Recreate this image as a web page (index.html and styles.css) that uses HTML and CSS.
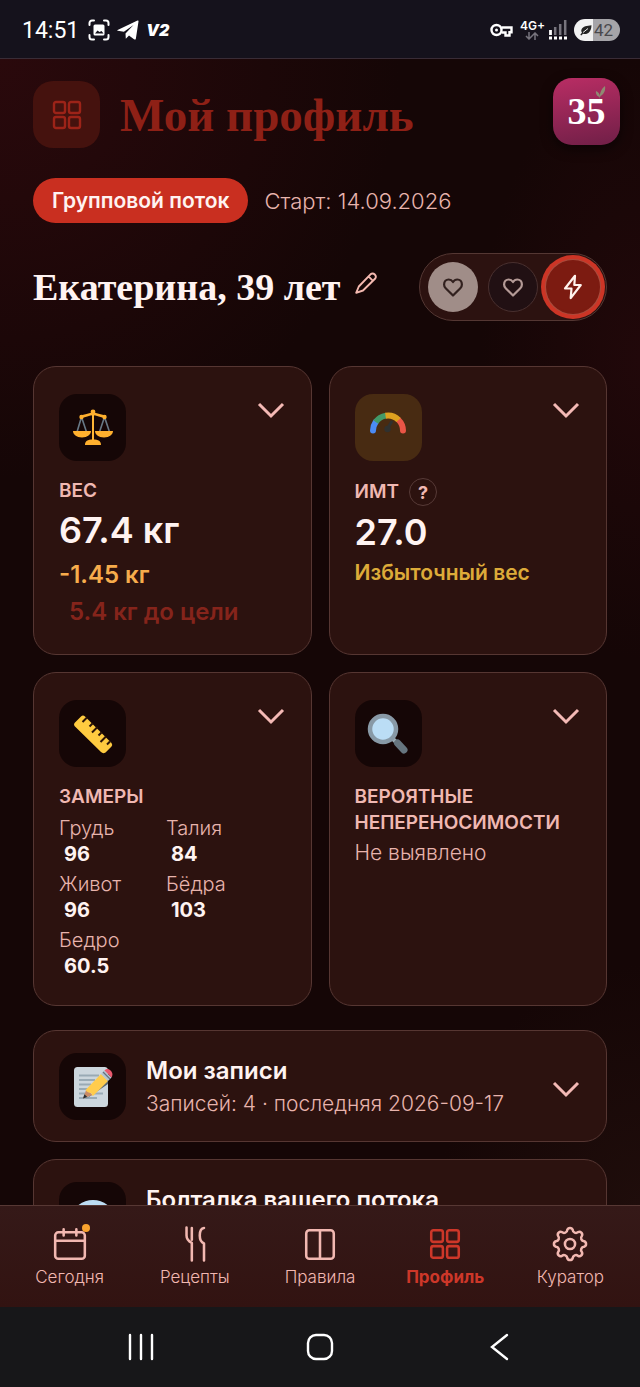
FILE: index.html
```html
<!DOCTYPE html>
<html lang="ru">
<head>
    <meta charset="UTF-8">
    <meta name="viewport" content="width=device-width, initial-scale=1.0">
    <title>Мой профиль</title>
    <link rel="stylesheet" href="styles.css">
</head>
<body>
    <svg class="defs" aria-hidden="true">
        <symbol id="grid" viewBox="-1 -1 34 34">
            <rect x="3" y="3" width="11" height="11" rx="2"/>
            <rect x="18" y="3" width="11" height="11" rx="2"/>
            <rect x="3" y="18" width="11" height="11" rx="2"/>
            <rect x="18" y="18" width="11" height="11" rx="2"/>
        </symbol>
        <symbol id="heart" viewBox="0 0 24 24">
            <path d="M12 20.5 4.7 13.2a5.2 5.2 0 0 1-1.6-3.8c0-2.9 2-4.9 4.6-4.9 1.8 0 3.3.9 4.3 2.5 1-1.6 2.5-2.500 4.300-2.500 2.600 0 4.600 2 4.600 4.900 0 1.500-.5 2.700-1.600 3.800z"/>
        </symbol>
        <symbol id="chevron" viewBox="0 0 28 28">
            <path d="M2 10l12 12 12-12"/>
        </symbol>
    </svg>

    <div class="status-bar">
        <div class="status-left">
            <span class="time">14:51</span>
            <svg width="22" height="22" viewBox="0 0 22 22" fill="none" stroke="#fff" stroke-width="2" stroke-linecap="round">
                <path d="M1.5 6V4a2.500 2.500 0 0 1 2.500-2.500h2M16 1.500h2A2.500 2.500 0 0 1 20.500 4v2M20.500 16v2a2.500 2.500 0 0 1-2.500 2.500h-2M6 20.500H4A2.500 2.500 0 0 1 1.500 18v-2"/>
                <rect x="5.5" y="5.5" width="11" height="11" rx="1.5" fill="#fff" stroke="none"/>
                <path d="M7 14.500l2.500-3 2 1.500 2-1 2 2.500z" fill="#15121c" stroke="none"/>
            </svg>
            <svg width="22" height="20" viewBox="0 0 22 20" fill="#fff">
                <path d="M.6 10 20.500.6c.8-.3 1.100 0 1 .8l-2.600 17c-.2 1.200-.9 1.500-1.900.8l-5-3.700-3.200 3.200-.3-5.300 8-8.300-9.600 6.700L.8 10.800c-.6-.2-.7-.5-.2-.8z"/>
            </svg>
            <span class="vpn">V2</span>
        </div>
        <div class="status-right">
            <svg width="23" height="14" viewBox="0 0 23 14" fill="none" stroke="#fff" stroke-width="2.4">
                <circle cx="6.5" cy="7" r="5"/>
                <circle cx="6.5" cy="7" r="1.5" fill="#fff" stroke="none"/>
                <path d="M11.500 4.500H21.500v4.800h-2V12.500h-4V9.500h-4"/>
            </svg>
            <div class="network">
                <span>4G+</span>
                <svg width="14" height="8" viewBox="0 0 14 8" fill="none" stroke="#77747d" stroke-width="1.5">
                    <path d="M4 0v7M1 4l3 3 3-3M10 8V1M7 4l3-3 3 3"/>
                </svg>
            </div>
            <svg width="20" height="20" viewBox="0 0 20 20">
                <path d="M7.200 7v8M12.200 4v11M17.200 0v15" stroke="#77747d" stroke-width="2.5"/>
                <path d="M2.500 10v5M1 18h3M6 18h3M11 18h3M16 18h3" stroke="#fff" stroke-width="2.8"/>
            </svg>
            <div class="battery">
                <svg width="12" height="11" viewBox="0 0 12 11" fill="#222">
                    <path d="M11.500.3C7 .8 3 1.300 1.600 4.200.9 5.700 1.500 7 2 7.600L.3 9.700l1 .8L3 8.800c3.600 1.200 8.300-.8 8.500-8.500z"/>
                    <path d="M3 7.500 8 3.500" stroke="#eee"/>
                </svg>
                <span>42</span>
            </div>
        </div>
    </div>

    <main class="page">
        <header class="page-header">
            <div class="heading">
                <div class="heading-icon"><svg class="line-icon" width="34" height="34"><use href="#grid"/></svg></div>
                <h1>Мой профиль</h1>
            </div>
            <div class="logo">
                35
                <svg class="sprout" width="11" height="13" viewBox="0 0 11 13" fill="#8f8a72">
                    <path d="M4.500 13C4.500 8 6 3 10 0c.8 4-.8 8-4.500 10z"/>
                    <path d="M5 11C2 10.500.5 8 1 5c2.500 1 4 3 4 6z"/>
                </svg>
            </div>
        </header>

        <div class="content">
            <div class="stream">
                <span class="chip">Групповой поток</span>
                <span class="start">Старт: 14.09.2026</span>
            </div>

            <div class="user">
                <h2>Екатерина, 39 лет</h2>
                <button class="edit" aria-label="Изменить">
                    <svg width="22" height="22" viewBox="0 0 22 22" fill="none" stroke="#f4b9b0" stroke-width="1.9" stroke-linejoin="round">
                        <path d="M1.200 20.800 3.800 14.500 15.500 2.300a3.200 3.200 0 0 1 4.500 4.500L8 18.500zM13.500 4.300l4.500 4.500"/>
                    </svg>
                </button>
                <div class="themes">
                    <button class="theme light" aria-label="Светлая тема"><svg width="24" height="24"><use href="#heart"/></svg></button>
                    <button class="theme dark" aria-label="Тёмная тема"><svg width="24" height="24"><use href="#heart"/></svg></button>
                    <button class="theme bright" aria-label="Яркая тема">
                        <svg width="26" height="26" viewBox="0 0 26 26"><path d="M15 1.800 5 14.500h6.500l-.8 9.700L20.800 11h-6.500z"/></svg>
                    </button>
                </div>
            </div>

            <div class="cards">
                <section class="card">
                    <div class="card-top">
                        <div class="tile">
                            <svg width="42" height="42" viewBox="0 0 42 42">
                                <path d="M9.500 10 5 25M9.500 10l5 15M32.500 10l-5 15M32.500 10l5 15" stroke="#687986" stroke-width="1.6" fill="none"/>
                                <path d="M8 9.500c5 .5 8-2.500 13-2.500s8 3 13 2.500" stroke="#ffb02e" stroke-width="2.6" fill="none"/>
                                <path d="M21 4v31" stroke="#ffb636" stroke-width="2"/>
                                <g fill="#ffb02e">
                                    <circle cx="21" cy="5" r="2.4"/><circle cx="9.5" cy="10" r="2.2"/><circle cx="32.5" cy="10" r="2.2"/>
                                    <path d="M1 24h18c0 3.500-3.500 6.500-9 6.500S1 27.500 1 24zM23 24h18c0 3.500-3.500 6.500-9 6.500s-9-3-9-6.500zM13 38c0-4 2.500-5.500 8-5.500s8 1.500 8 5.500z"/>
                                </g>
                            </svg>
                        </div>
                        <button class="toggle" aria-label="Вес"><svg width="28" height="28"><use href="#chevron"/></svg></button>
                    </div>
                    <h3>Вес</h3>
                    <p class="value">67.4 кг</p>
                    <p class="delta">-1.45 кг</p>
                    <p class="goal">5.4 кг до цели</p>
                </section>

                <section class="card">
                    <div class="card-top">
                        <div class="tile amber">
                            <svg width="42" height="42" viewBox="0 0 42 42" fill="none" stroke-width="6">
                                <path d="M6 23.500A15 15 0 0 1 8.700 15" stroke="#4b8bf5" stroke-linecap="round"/>
                                <path d="M36 23.500A15 15 0 0 0 31.600 13" stroke="#ea5546" stroke-linecap="round"/>
                                <path d="M8.700 15A15 15 0 0 1 19 8.600" stroke="#429a68"/>
                                <path d="M18.500 8.700A15 15 0 0 1 31.600 13" stroke="#dda11f"/>
                                <path d="M20.500 21.500 24.500 15" stroke="#30312f" stroke-width="3" stroke-linecap="round"/>
                                <circle cx="20.5" cy="22" r="3.2" fill="#30312f" stroke="none"/>
                            </svg>
                        </div>
                        <button class="toggle" aria-label="ИМТ"><svg width="28" height="28"><use href="#chevron"/></svg></button>
                    </div>
                    <div class="label-row">
                        <h3>ИМТ</h3>
                        <button class="help">?</button>
                    </div>
                    <p class="value">27.0</p>
                    <p class="note">Избыточный вес</p>
                </section>

                <section class="card">
                    <div class="card-top">
                        <div class="tile">
                            <svg width="42" height="42" viewBox="0 0 42 42">
                                <path d="M2.500 10 9 3.500Q11 1.500 13 3.500L39.500 30Q41 32 39.500 33.500L33.500 39.500Q31 41 29 39L2.500 13Q1.500 11.500 2.500 10z" fill="#ffcb40"/>
                                <path d="M15 3.500 10.500 8M20.500 9.500l-3 3M25.500 13 20 18.500M29.500 18.500l-3 3M34 22.500 28.500 28M38 27.500l-3 3" transform="translate(0 1)" stroke="#2b1408" stroke-width="2"/>
                            </svg>
                        </div>
                        <button class="toggle" aria-label="Замеры"><svg width="28" height="28"><use href="#chevron"/></svg></button>
                    </div>
                    <h3>Замеры</h3>
                    <dl class="sizes">
                        <div><dt>Грудь</dt><dd>96</dd></div>
                        <div><dt>Талия</dt><dd>84</dd></div>
                        <div><dt>Живот</dt><dd>96</dd></div>
                        <div><dt>Бёдра</dt><dd>103</dd></div>
                        <div><dt>Бедро</dt><dd>60.5</dd></div>
                    </dl>
                </section>

                <section class="card">
                    <div class="card-top">
                        <div class="tile">
                            <svg width="42" height="42" viewBox="0 0 42 42">
                                <path d="M26 26l4 4" stroke="#9aabb5" stroke-width="4"/>
                                <path d="M30.500 30l6.500 7" stroke="#66757f" stroke-width="7" stroke-linecap="round"/>
                                <circle cx="16" cy="16" r="13" fill="#bbddf5" stroke="#8899a6" stroke-width="4.5"/>
                            </svg>
                        </div>
                        <button class="toggle" aria-label="Непереносимости"><svg width="28" height="28"><use href="#chevron"/></svg></button>
                    </div>
                    <h3>Вероятные непереносимости</h3>
                    <p class="plain">Не выявлено</p>
                </section>
            </div>

            <div class="rows">
                <section class="row">
                    <div class="tile">
                        <svg width="42" height="42" viewBox="0 0 42 42">
                            <rect x="2" y="1" width="34" height="40" rx="3.5" fill="#ccd6dd"/>
                            <path d="M7 9.500h20M7 14h16M7 18.500h12M7 23h9M7 27.500h6M22 27.500h9M7 32h18" stroke="#99aab5" stroke-width="1.8"/>
                            <path d="M14 33 36 18V11L40 10z" fill="#596672"/>
                            <path d="M11 32.500 14.500 23 20.500 29z" fill="#c98b67"/>
                            <path d="M11 32.500l1.400-4.300 2.900 2.700z" fill="#292f33"/>
                            <path d="M13.500 24 29 8l7 7-15 15c-1-.8-1.500-1.800-1.700-2.800-2.300-.4-4.700-1-5.800-3.200z" fill="#ffcc4d"/>
                            <path d="M29 8l3.500-3.500 7 7L36 15z" fill="#b6c6d0"/>
                            <path d="M31 6l7 7" stroke="#66757f" stroke-width="1.2"/>
                            <path d="M32.500 4.500c3-4.500 10.500 1.500 7 7z" fill="#ea596e"/>
                        </svg>
                    </div>
                    <div class="row-text">
                        <h4>Мои записи</h4>
                        <p>Записей: 4 · последняя 2026-09-17</p>
                    </div>
                    <button class="toggle" aria-label="Мои записи"><svg width="28" height="28"><use href="#chevron"/></svg></button>
                </section>
                <section class="row">
                    <div class="tile">
                        <svg width="42" height="42" viewBox="0 0 42 42">
                            <ellipse cx="21" cy="21" rx="20" ry="16" fill="#bdddf4"/>
                            <path d="M10 32l-2 9 12-5z" fill="#bdddf4"/>
                        </svg>
                    </div>
                    <div class="row-text">
                        <h4>Болталка вашего потока</h4>
                    </div>
                </section>
            </div>
        </div>
    </main>

    <nav class="tabs">
        <a href="#today">
            <svg class="line-icon" viewBox="0 0 34 34">
                <rect x="3" y="6" width="28" height="25" rx="3"/><path d="M3 14h28M11 3v6M23 3v6"/>
            </svg>
            <span>Сегодня</span>
            <i class="dot"></i>
        </a>
        <a href="#recipes">
            <svg class="line-icon" viewBox="0 0 34 34">
                <path d="M9 1.500V9c0 3 1 5 5 7v16.500M14 2v11M25.500 32.500V16.500c-2.500-1-4-3-4-7.500 0-4 1.500-7 4-7.200"/>
            </svg>
            <span>Рецепты</span>
        </a>
        <a href="#rules">
            <svg class="line-icon" viewBox="0 0 34 34">
                <rect x="4" y="4" width="26" height="27" rx="3"/><path d="M17 4v27"/>
            </svg>
            <span>Правила</span>
        </a>
        <a href="#profile" class="active">
            <svg class="line-icon"><use href="#grid"/></svg>
            <span>Профиль</span>
        </a>
        <a href="#curator">
            <svg class="line-icon" viewBox="1 1 34 34">
                <circle cx="18" cy="18" r="4.8"/>
                <path d="M31.250 15.420A2.700 2.700 0 0 1 31.250 20.580A3 3 0 0 0 29.190 25.550A2.700 2.700 0 0 1 25.550 29.190A3 3 0 0 0 20.580 31.250A2.700 2.700 0 0 1 15.420 31.250A3 3 0 0 0 10.450 29.190A2.700 2.700 0 0 1 6.810 25.550A3 3 0 0 0 4.750 20.580A2.700 2.700 0 0 1 4.750 15.420A3 3 0 0 0 6.810 10.450A2.700 2.700 0 0 1 10.450 6.810A3 3 0 0 0 15.420 4.750A2.700 2.700 0 0 1 20.580 4.750A3 3 0 0 0 25.550 6.810A2.700 2.700 0 0 1 29.190 10.450A3 3 0 0 0 31.250 15.420z"/>
            </svg>
            <span>Куратор</span>
        </a>
    </nav>

    <div class="system-nav">
        <button aria-label="Недавние"><svg width="28" height="28" viewBox="0 0 28 28"><path d="M3 2v24M14 2v24M25 2v24"/></svg></button>
        <button aria-label="Домой"><svg width="28" height="28" viewBox="0 0 28 28"><rect x="2" y="2" width="24" height="24" rx="8"/></svg></button>
        <button aria-label="Назад"><svg width="28" height="28" viewBox="0 0 28 28"><path d="M22 2 7 14l15 12"/></svg></button>
    </div>
</body>
</html>
```
FILE: styles.css
```css
* {
    box-sizing: border-box;
}
body {
    margin: 0;
    height: 100vh;
    display: flex;
    flex-direction: column;
    background: #150606;
    color: #fff3f1;
    font-family: Inter, "Open Sans", sans-serif;
}
h1, h2, h3, h4, p, dl, dd {
    margin: 0;
}
button {
    padding: 0;
    border: none;
    background: none;
    font-family: inherit;
    cursor: pointer;
}
svg {
    display: block;
}
.defs {
    display: none;
}
.line-icon {
    fill: none;
    stroke: currentColor;
    stroke-width: 2.4;
    stroke-linecap: round;
    stroke-linejoin: round;
}

/* phone status bar */
.status-bar {
    display: flex;
    justify-content: space-between;
    align-items: center;
    height: 59px;
    padding: 2px 20px 0 22px;
    background: #15121c;
    border-bottom: 1px solid #392c36;
    flex-shrink: 0;
}
.status-left, .status-right {
    display: flex;
    align-items: center;
    color: #fff;
}
.status-left {
    gap: 7px;
}
.status-right {
    gap: 3px;
}
.time {
    font: 23px Roboto, sans-serif;
    margin-right: 2px;
}
.vpn {
    font-size: 16px;
    font-weight: 900;
    font-style: italic;
}
.network {
    display: flex;
    flex-direction: column;
    align-items: center;
    margin-left: 4px;
    font-size: 12px;
    line-height: 12px;
    font-weight: 600;
}
.battery {
    display: flex;
    align-items: center;
    gap: 2px;
    width: 46px;
    height: 22px;
    margin-left: 3px;
    padding-left: 6px;
    border-radius: 11px;
    background: linear-gradient(90deg, #f1f1f1 42%, #a5a4a8 42%);
    color: #49484c;
    font: 17px Roboto, sans-serif;
}

/* page */
.page {
    flex: 1;
    min-height: 0;
    overflow: hidden;
    background:
        radial-gradient(ellipse 400px 420px at 0 0, #2a090c, transparent),
        radial-gradient(ellipse 160px 300px at 100% 300px, #21080a, transparent),
        radial-gradient(ellipse 200px 240px at 100% 100%, #1f0d0b, transparent),
        #150606;
}
.page-header {
    display: flex;
    justify-content: space-between;
    align-items: flex-start;
    padding: 19px 20px 0 33px;
}
.heading {
    display: flex;
    align-items: center;
    gap: 20px;
    padding-top: 3px;
}
.heading-icon {
    display: flex;
    align-items: center;
    justify-content: center;
    width: 67px;
    height: 67px;
    border-radius: 20px;
    background: #45120e;
    color: #9c2318;
}
h1 {
    color: #8e2016;
    font: bold 47px/60px "Liberation Serif", serif;
}
.logo {
    position: relative;
    width: 67px;
    height: 67px;
    border-radius: 19px;
    background: linear-gradient(170deg, #b92d64, #701f47);
    box-shadow: 0 4px 12px #0008;
    color: #fff;
    font: bold 38px/66px "Liberation Serif", serif;
    text-align: center;
}
.sprout {
    position: absolute;
    top: 8px;
    left: 42px;
}
.content {
    padding: 30px 33px 0;
}
.stream {
    display: flex;
    align-items: center;
    gap: 16px;
}
.chip {
    padding: 0 19px;
    border-radius: 23px;
    background: #c92f20;
    font-size: 21px;
    line-height: 45px;
    font-weight: 600;
}
.start {
    color: #e8b4ad;
    font-size: 22px;
    font-weight: 300;
}
.user {
    display: flex;
    align-items: center;
    margin-top: 30px;
}
h2 {
    font: bold 38px/50px "Liberation Serif", serif;
}
.edit {
    margin: 0 0 8px 14px;
}
.themes {
    display: flex;
    gap: 10px;
    margin-left: auto;
    padding: 8px;
    border: 1px solid #543733;
    border-radius: 34px;
    background: #2c1210;
}
.theme {
    display: flex;
    align-items: center;
    justify-content: center;
    width: 50px;
    height: 50px;
    border-radius: 50%;
}
.theme svg {
    fill: none;
    stroke: currentColor;
    stroke-width: 2.2;
    stroke-linejoin: round;
}
.light {
    background: #a08d88;
    color: #32211f;
}
.dark {
    border: 1px solid #49302f;
    background: #211013;
    color: #b49a96;
}
.bright {
    background: #7c1b11;
    box-shadow: 0 0 0 2px #7c1b11, 0 0 0 3px #a94c3d, 0 0 0 7px #cc3526;
    color: #fff3ed;
}

/* cards */
.cards {
    display: grid;
    grid-template-columns: 1fr 1fr;
    gap: 17px;
    margin-top: 45px;
}
.card, .row {
    border: 1px solid #563632;
    border-radius: 23px;
    background: #2c120f;
}
.card {
    padding: 27px 26px 26px 25px;
}
.card-top {
    display: flex;
    justify-content: space-between;
    align-items: flex-start;
    margin-bottom: 17px;
}
.tile {
    display: flex;
    align-items: center;
    justify-content: center;
    width: 67px;
    height: 67px;
    border-radius: 18px;
    background: #150606;
    flex-shrink: 0;
}
.amber {
    background: #482b12;
}
.toggle svg {
    fill: none;
    stroke: #f4b9b5;
    stroke-width: 3;
}
h3 {
    color: #f0b8b2;
    font-size: 19px;
    line-height: 26px;
    font-weight: 600;
    text-transform: uppercase;
}
.label-row {
    display: flex;
    align-items: center;
    gap: 10px;
}
.help {
    width: 28px;
    height: 28px;
    border: 1px solid #573a37;
    border-radius: 50%;
    color: #f0b8b2;
    font-size: 18px;
    font-weight: 700;
}
.value {
    margin-top: 2px;
    font-size: 36px;
    line-height: 48px;
    font-weight: 600;
}
.delta, .goal {
    margin-top: 5px;
    font-size: 24px;
    line-height: 32px;
    font-weight: 600;
}
.delta {
    color: #f7ac4c;
}
.goal {
    padding-left: 10px;
    color: #85241b;
}
.note {
    color: #ddab39;
    font-size: 21px;
    line-height: 34px;
    font-weight: 600;
}
.sizes {
    display: grid;
    grid-template-columns: 107px 1fr;
    row-gap: 4px;
    margin-top: 5px;
    font-size: 20px;
    line-height: 26px;
}
.sizes dt, .plain {
    color: #e8b4ad;
    font-weight: 300;
}
.sizes dd {
    padding-left: 5px;
    font-weight: 700;
}
.plain {
    margin-top: 4px;
    font-size: 21px;
    line-height: 26px;
}
.rows {
    display: flex;
    flex-direction: column;
    gap: 17px;
    margin-top: 24px;
}
.row {
    display: flex;
    align-items: flex-start;
    gap: 20px;
    padding: 22px 26px 21px 25px;
}
.row .toggle {
    align-self: center;
}
.row-text {
    flex: 1;
}
h4 {
    font-size: 24px;
    line-height: 36px;
    font-weight: 600;
}
.row p {
    color: #e8b4ad;
    font-size: 21px;
    line-height: 30px;
    font-weight: 300;
}

/* bottom tabs */
.tabs {
    display: flex;
    height: 102px;
    padding: 20px 7px 0;
    border-top: 1px solid #573834;
    background: linear-gradient(#351918, #321311);
    flex-shrink: 0;
}
.tabs a {
    position: relative;
    flex: 1;
    display: flex;
    flex-direction: column;
    align-items: center;
    justify-content: space-between;
    height: 63px;
    color: #f2b8b1;
    font-size: 17px;
    line-height: 24px;
    font-weight: 300;
    text-decoration: none;
}
.tabs svg {
    width: 36px;
    height: 36px;
}
.tabs .active {
    color: #cd3729;
    font-weight: 700;
}
.dot {
    position: absolute;
    top: -2px;
    left: 75px;
    width: 8px;
    height: 8px;
    border-radius: 50%;
    background: #f9a32f;
}
.system-nav {
    display: flex;
    justify-content: space-around;
    align-items: center;
    height: 80px;
    padding: 0 51px;
    background: #171719;
    flex-shrink: 0;
}
.system-nav svg {
    fill: none;
    stroke: #fff;
    stroke-width: 2.4;
    stroke-linecap: round;
}
```
